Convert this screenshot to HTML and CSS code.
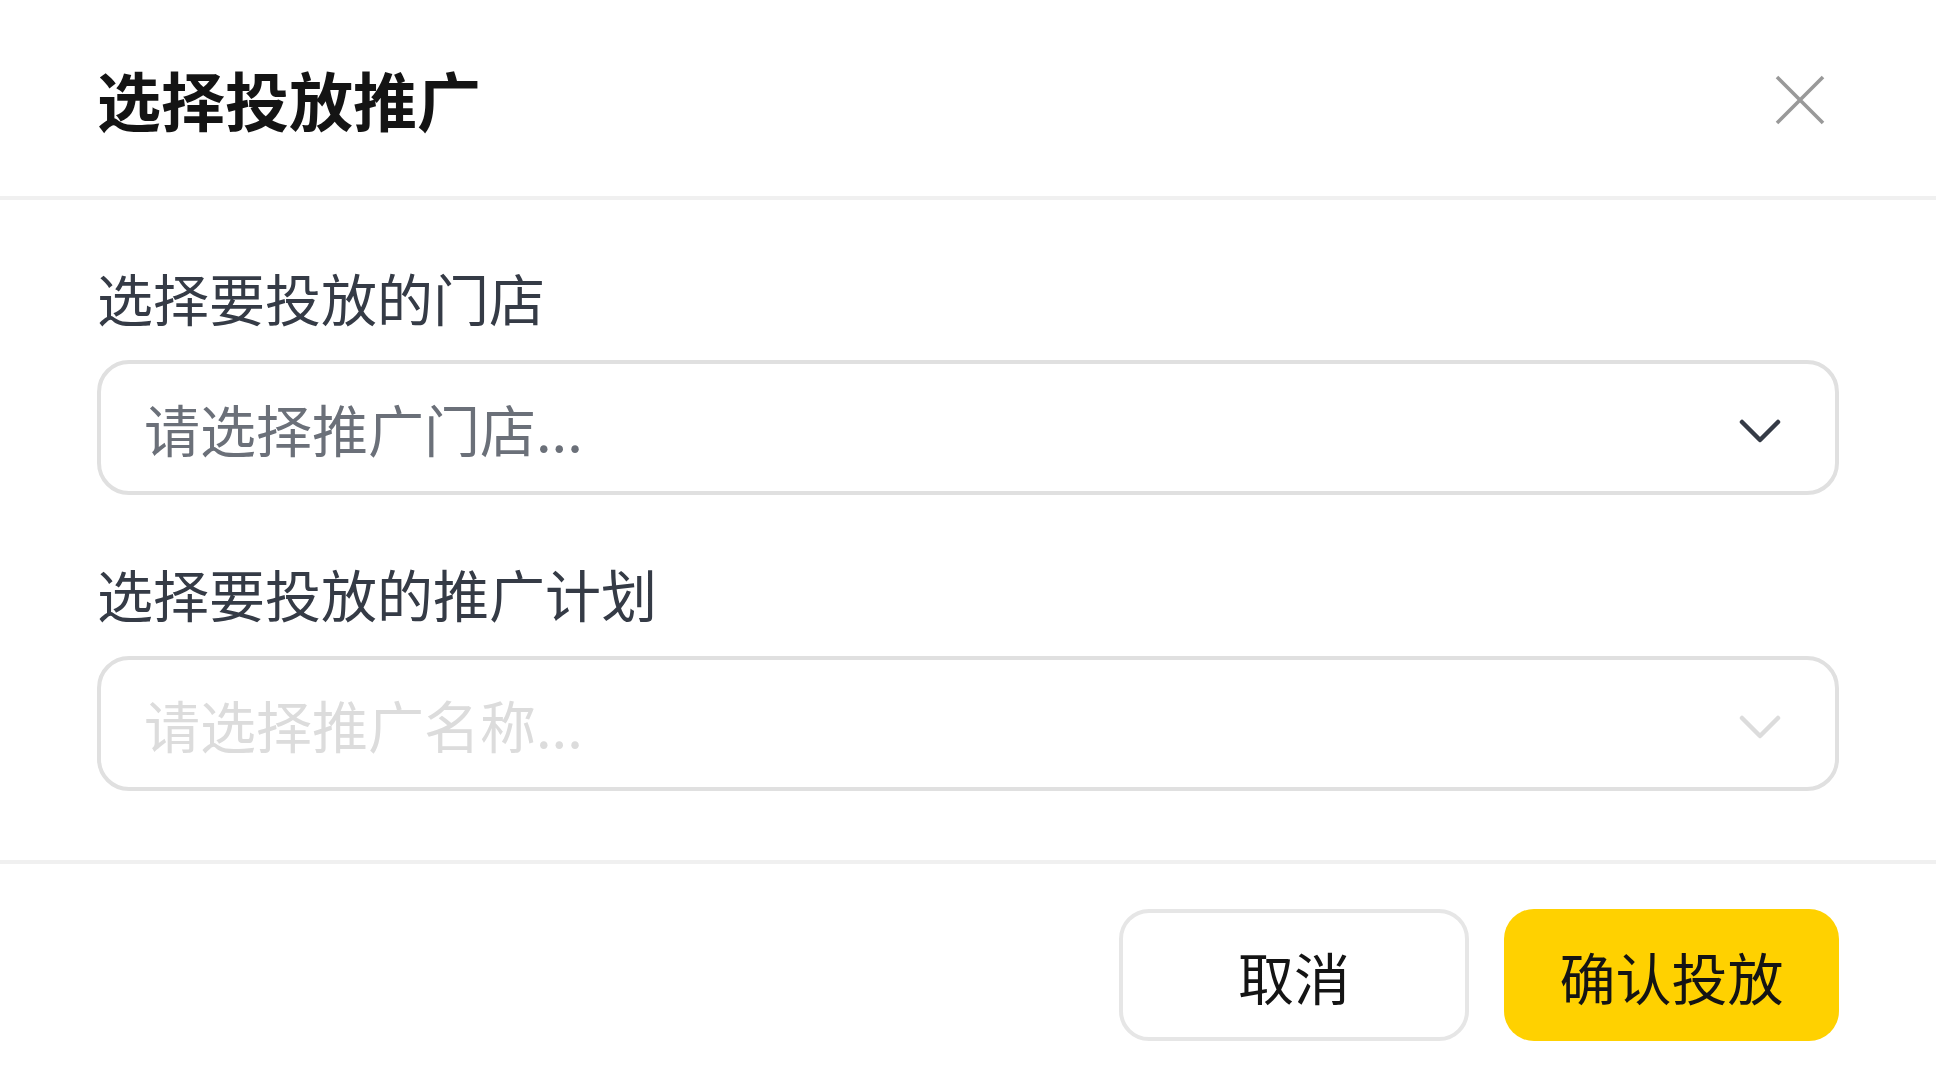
FILE: index.html
```html
<!DOCTYPE html>
<html lang="zh-CN">
<head>
    <meta charset="UTF-8">
    <meta name="viewport" content="width=device-width, initial-scale=1.0">
    <title>选择投放推广</title>
    <link rel="stylesheet" href="styles.css">
</head>
<body>
    <div class="dialog">
        <!-- 标题栏 -->
        <div class="dialog-header">
            <h1 class="dialog-title">选择投放推广</h1>
            <span class="close">
                <svg width="50" height="50" viewBox="0 0 50 50">
                    <path d="M2 2L48 48M48 2L2 48" stroke="#999" stroke-width="3.6" fill="none"/>
                </svg>
            </span>
        </div>

        <!-- 表单 -->
        <div class="dialog-body">
            <div class="field">
                <label class="field-label">选择要投放的门店</label>
                <div class="select">
                    <span class="placeholder">请选择推广门店...</span>
                    <svg class="arrow" width="72" height="72" viewBox="0 0 24 24">
                        <path d="M6 10l6 6 6-6" stroke="#353b46" stroke-width="1.5" stroke-linecap="round" stroke-linejoin="round" fill="none"/>
                    </svg>
                </div>
            </div>
            <div class="field">
                <label class="field-label">选择要投放的推广计划</label>
                <div class="select disabled">
                    <span class="placeholder">请选择推广名称...</span>
                    <svg class="arrow" width="72" height="72" viewBox="0 0 24 24">
                        <path d="M6 10l6 6 6-6" stroke="#dcdcdc" stroke-width="1.5" stroke-linecap="round" stroke-linejoin="round" fill="none"/>
                    </svg>
                </div>
            </div>
        </div>

        <!-- 底部按钮 -->
        <div class="dialog-footer">
            <button class="btn btn-cancel">取消</button>
            <button class="btn btn-confirm">确认投放</button>
        </div>
    </div>
</body>
</html>
```

FILE: styles.css
```css
body {
    margin: 0;
    padding: 0;
    background-color: #fff;
    font-family: "Noto Sans CJK SC", "Noto Sans", sans-serif;
}
.dialog {
    width: 100%;
    height: 1092px;
    display: flex;
    flex-direction: column;
    overflow: hidden;
}
.dialog-header {
    height: 196px;
    display: flex;
    align-items: center;
    justify-content: space-between;
    padding: 0 111px 0 97px;
    border-bottom: 4px solid #f0f0f0;
}
.dialog-title {
    margin: 0;
    font-size: 64px;
    font-weight: 700;
    line-height: 84px;
    color: #141414;
}
.close {
    display: flex;
    margin-top: 3px;
    cursor: pointer;
}
.dialog-body {
    padding: 55px 97px 69px;
}
.field + .field {
    margin-top: 56px;
}
.field-label {
    display: block;
    font-size: 56px;
    line-height: 84px;
    color: #353b46;
    margin-bottom: 21px;
}
.select {
    height: 135px;
    box-sizing: border-box;
    border: 4px solid #e0e0e0;
    border-radius: 32px;
    display: flex;
    align-items: center;
    justify-content: space-between;
    padding: 0 39px 0 43px;
    cursor: pointer;
}
.placeholder {
    font-size: 56px;
    line-height: 84px;
    color: #6b7079;
}
.select.disabled {
    cursor: not-allowed;
}
.select.disabled .placeholder {
    color: #dcdcdc;
}
.arrow {
    display: block;
}
.dialog-footer {
    border-top: 4px solid #f0f0f0;
    padding: 45px 97px 0;
    display: flex;
    justify-content: flex-end;
    gap: 35px;
}
.btn {
    height: 132px;
    box-sizing: border-box;
    border-radius: 30px;
    font-family: inherit;
    font-size: 56px;
    color: #141414;
    cursor: pointer;
}
.btn-cancel {
    width: 350px;
    background-color: #fff;
    border: 4px solid #e6e6e6;
}
.btn-confirm {
    width: 335px;
    background-color: #ffd100;
    border: none;
}
```
